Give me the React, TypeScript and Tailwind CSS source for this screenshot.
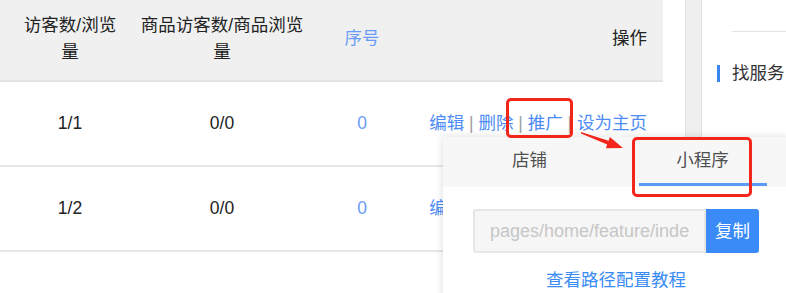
import React from "react";

const font = { fontFamily: '"Liberation Sans", Arial, "Noto Sans CJK SC", sans-serif' };

function Row({ a, b }: { a: string; b: string }) {
  return (
    <div className="flex h-[85px] items-center border-b-2 border-[#e6e6e6] bg-white text-[#222]">
      <div className="w-[140px] text-center">{a}</div>
      <div className="w-[164px] text-center">{b}</div>
      <div className="w-[116px] text-center text-[#6a9cf7]">0</div>
      <div className="flex-1 pr-[16px] text-right text-[#4d8cf5]">
        编辑<span className="text-[#a0a0a0]"> | </span>删除<span className="text-[#a0a0a0]"> | </span>推广
        <span className="text-[#a0a0a0]"> | </span>设为主页
      </div>
    </div>
  );
}

export default function App() {
  return (
    <div
      className="relative flex h-[293px] w-[786px] overflow-hidden bg-white text-[17.5px] leading-[27px]"
      style={font}
    >
      {/* table */}
      <div className="flex w-[663px] shrink-0 flex-col">
        <div className="flex h-[82px] items-center border-b-2 border-[#e4e4e4] bg-[#f0f0f0] pb-[3px] text-[#222]">
          <div className="w-[140px] text-center">
            访客数/浏览
            <br />量
          </div>
          <div className="w-[164px] text-center">
            商品访客数/商品浏览
            <br />量
          </div>
          <div className="w-[116px] text-center text-[#6a9cf7]">序号</div>
          <div className="flex-1 pr-[16px] text-right">操作</div>
        </div>
        <Row a="1/1" b="0/0" />
        <Row a="1/2" b="0/0" />
      </div>

      {/* gap + side bar */}
      <div className="w-[22px] shrink-0" />
      <div className="w-[17px] shrink-0 border-x border-[#e2e2e2] bg-[#efefef]" />

      {/* right panel */}
      <div className="flex flex-1 flex-col pt-[31px]">
        <div className="ml-[30px] h-px bg-[#e3e3e3]" />
        <div className="mt-[28px] flex items-center">
          <div className="ml-[15px] h-[17px] w-[3px] bg-[#3a86f0]" />
          <span className="ml-[12px] whitespace-nowrap text-[#333]">找服务</span>
        </div>
      </div>

      {/* popover */}
      <div className="absolute left-[443px] top-[137px] h-[200px] w-[346px] bg-white shadow-[0_0_8px_rgba(0,0,0,0.14)]">
        <div className="absolute left-[168px] top-[-5px] h-[10px] w-[10px] rotate-45 bg-[#f7f7f7]" />
        <div className="relative flex h-[50px] bg-[#f7f7f7] text-[#4f4f4f]">
          <div className="flex flex-1 flex-col items-center pt-[11px]">
            <span className="leading-[24px]">店铺</span>
          </div>
          <div className="flex flex-1 flex-col items-center pt-[11px]">
            <span className="leading-[24px]">小程序</span>
            <div className="mb-[1px] mt-auto h-[3px] w-[128px] bg-[#5b9af5]" />
          </div>
        </div>
        <div className="flex flex-col items-center pt-[22px]">
          <div className="flex h-[44px]">
            <input
              readOnly
              value="pages/home/feature/index"
              className="h-[44px] w-[233px] rounded-l-[3px] border-2 border-[#e6e6e6] bg-[#f6f6f6] pl-[15px] pr-[15px] text-[18px] text-[#c6c6c6] outline-none"
              style={font}
            />
            <div className="flex h-[44px] w-[53px] items-center justify-center rounded-r-[3px] bg-[#3a8bf7] text-white">
              复制
            </div>
          </div>
          <div className="mt-[15px] leading-[24px] text-[#3a8cf5]">查看路径配置教程</div>
        </div>
      </div>

      {/* annotations */}
      <div className="absolute left-[506px] top-[98px] h-[40px] w-[67px] rounded-[5px] border-[3px] border-[#f3261c]" />
      <div className="absolute left-[632px] top-[137px] h-[60px] w-[120px] rounded-[5px] border-[3px] border-[#f3261c]" />
      <svg className="absolute left-[575px] top-[125px]" width="55" height="30" viewBox="0 0 55 30">
        <polygon
          points="6,7 33.6,15.7 34.9,11.9 48,23 30.9,23.3 32.2,19.5 6,8.5"
          fill="#f3261c"
        />
      </svg>
    </div>
  );
}
